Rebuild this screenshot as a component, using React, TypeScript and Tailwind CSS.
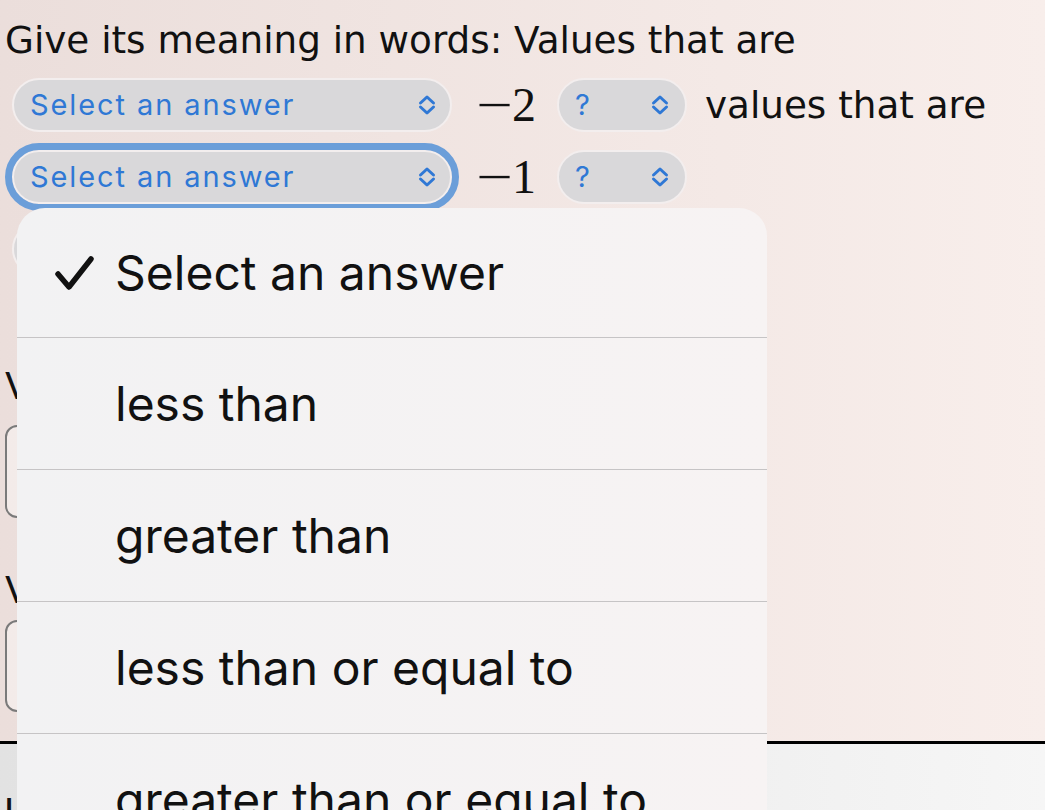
import React from "react";

const Chevrons = ({ className = "" }: { className?: string }) => (
  <svg width="20" height="24" viewBox="0 0 20 24" className={className}>
    <path
      d="M3.5 10 L10 4 L16.5 10 M3.5 14 L10 20 L16.5 14"
      stroke="#2f78d5"
      strokeWidth="3"
      fill="none"
      strokeLinecap="round"
      strokeLinejoin="round"
    />
  </svg>
);

const pillFont = { fontFamily: "Inter, 'Noto Sans', sans-serif" };

const SelectPill = ({ focused = false }: { focused?: boolean }) => (
  <div
    className={
      "flex h-[54px] w-[440px] items-center justify-between rounded-full border-2 border-[#f3eeee] bg-[#d9d8da] pl-[16px] pr-[13px] " +
      (focused ? "outline-[7px] outline-solid outline-[#6b9ed9]" : "")
    }
  >
    <span className="text-[29px] tracking-[1.9px] text-[#2f78d5]" style={pillFont}>
      Select an answer
    </span>
    <Chevrons />
  </div>
);

const QPill = () => (
  <div className="flex h-[54px] w-[130px] items-center justify-between rounded-full border-2 border-[#f3eeee] bg-[#d9d8da] pl-[16px] pr-[15px]">
    <span className="text-[29px] text-[#2f78d5]" style={pillFont}>
      ?
    </span>
    <Chevrons />
  </div>
);

const MathNum = ({ n }: { n: string }) => (
  <span className="flex items-center text-[48px] leading-none text-[#111]" style={{ fontFamily: "'Liberation Serif', serif" }}>
    <span className="inline-block w-[36px] origin-left scale-x-[1.35]">−</span>
    {n}
  </span>
);

const titleFont = { fontFamily: "'DejaVu Sans', sans-serif" };

export default function App() {
  const options = ["less than", "greater than", "less than or equal to", "greater than or equal to"];
  return (
    <div className="relative h-[810px] w-[1045px] overflow-hidden">
      <div className="h-[744px] border-b-[3px] border-black bg-gradient-to-r from-[#ebdedb] to-[#f8eeeb] pl-[5px]" style={titleFont}>
        <div className="pt-[18px] text-[37.3px] leading-[44px] text-[#111]">Give its meaning in words: Values that are</div>
        <div className="ml-[7px] mt-[16px] flex items-center">
          <SelectPill />
          <div className="ml-[24px]">
            <MathNum n="2" />
          </div>
          <div className="ml-[21px]">
            <QPill />
          </div>
          <span className="ml-[18px] text-[37.3px] leading-[44px] text-[#111]">values that are</span>
        </div>
        <div className="ml-[7px] mt-[18px] flex items-center">
          <SelectPill focused />
          <div className="ml-[24px]">
            <MathNum n="1" />
          </div>
          <div className="ml-[21px]">
            <QPill />
          </div>
        </div>
        <div className="ml-[7px] mt-[18px] flex items-center">
          <SelectPill />
        </div>
        <div className="mt-[88px] text-[37.3px] leading-[44px] text-[#111]">Values</div>
        <div className="mt-[17px] h-[93px] w-[300px] rounded-[12px] border-2 border-[#7a7a7a] bg-white/40"></div>
        <div className="mt-[50px] text-[37.3px] leading-[44px] text-[#111]">Values</div>
        <div className="mt-[8px] h-[92px] w-[300px] rounded-[12px] border-2 border-[#7a7a7a] bg-white/40"></div>
      </div>
      <div className="h-[66px] bg-gradient-to-r from-[#e2e2e2] to-[#f6f6f6] pl-[4px] pt-[46px] text-[37.3px] leading-[44px] text-[#111]" style={titleFont}>
        Use
      </div>

      <div
        className="absolute left-[17px] top-[208px] w-[750px] rounded-[28px] bg-gradient-to-r from-[#f2f2f3] to-[#f7f3f3]"
        style={pillFont}
      >
        <div className="flex h-[130px] items-center border-b border-[#c6c4c5]">
          <svg width="46" height="40" viewBox="0 0 46 40" className="ml-[36px] mr-[16px]">
            <path d="M5 21 L16 34 L38 6" stroke="#111" strokeWidth="5.5" fill="none" strokeLinecap="round" strokeLinejoin="round" />
          </svg>
          <span className="text-[48px] text-[#111]">Select an answer</span>
        </div>
        {options.map((o) => (
          <div key={o} className="flex h-[132px] items-center border-b border-[#c6c4c5] pl-[98px]">
            <span className="text-[48px] text-[#111]">{o}</span>
          </div>
        ))}
      </div>
    </div>
  );
}
